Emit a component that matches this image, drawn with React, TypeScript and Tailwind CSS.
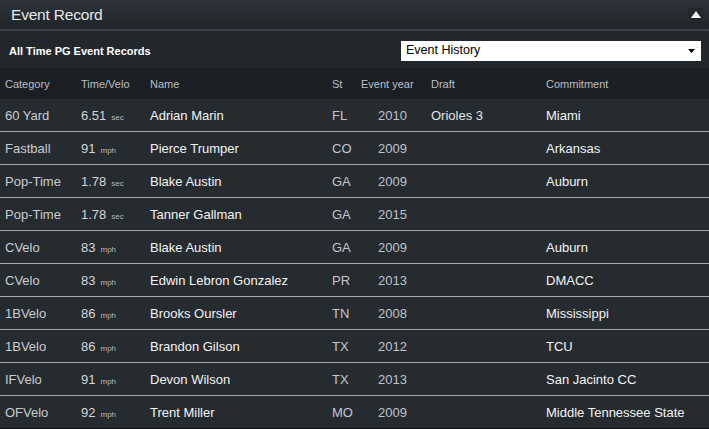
import React from 'react';

type Rec = {
  cat: string;
  val: string;
  unit: string;
  name: string;
  st: string;
  year: string;
  draft: string;
  commit: string;
};

const records: Rec[] = [
  { cat: '60 Yard', val: '6.51', unit: 'sec', name: 'Adrian Marin', st: 'FL', year: '2010', draft: 'Orioles 3', commit: 'Miami' },
  { cat: 'Fastball', val: '91', unit: 'mph', name: 'Pierce Trumper', st: 'CO', year: '2009', draft: '', commit: 'Arkansas' },
  { cat: 'Pop-Time', val: '1.78', unit: 'sec', name: 'Blake Austin', st: 'GA', year: '2009', draft: '', commit: 'Auburn' },
  { cat: 'Pop-Time', val: '1.78', unit: 'sec', name: 'Tanner Gallman', st: 'GA', year: '2015', draft: '', commit: '' },
  { cat: 'CVelo', val: '83', unit: 'mph', name: 'Blake Austin', st: 'GA', year: '2009', draft: '', commit: 'Auburn' },
  { cat: 'CVelo', val: '83', unit: 'mph', name: 'Edwin Lebron Gonzalez', st: 'PR', year: '2013', draft: '', commit: 'DMACC' },
  { cat: '1BVelo', val: '86', unit: 'mph', name: 'Brooks Oursler', st: 'TN', year: '2008', draft: '', commit: 'Mississippi' },
  { cat: '1BVelo', val: '86', unit: 'mph', name: 'Brandon Gilson', st: 'TX', year: '2012', draft: '', commit: 'TCU' },
  { cat: 'IFVelo', val: '91', unit: 'mph', name: 'Devon Wilson', st: 'TX', year: '2013', draft: '', commit: 'San Jacinto CC' },
  { cat: 'OFVelo', val: '92', unit: 'mph', name: 'Trent Miller', st: 'MO', year: '2009', draft: '', commit: 'Middle Tennessee State' },
];

export default function App() {
  return (
    <div className="w-[709px] h-[429px] overflow-hidden bg-[#262b30] font-['Liberation_Sans',Arial,sans-serif]">
      {/* Title bar */}
      <div className="h-[29px] flex items-center justify-between bg-gradient-to-b from-[#2e343a] to-[#1f2428] pl-[11px] pr-[6px]">
        <span className="text-[15.5px] text-[#e6e8ea] tracking-[-0.2px]">Event Record</span>
        <div className="w-[15px] h-[14px] flex items-center justify-center bg-[#22272b]">
          <svg width="10" height="7" viewBox="0 0 10 7">
            <path d="M5 0 L10 7 L0 7 Z" fill="#ffffff" />
          </svg>
        </div>
      </div>
      <div className="h-[2px] bg-[#3b4147]" />

      {/* Sub header */}
      <div className="h-[37px] flex items-center justify-between bg-[#22272c] pl-[9px] pr-[8px] pt-[2px]">
        <span className="text-[11px] font-bold text-white mt-[2px]">All Time PG Event Records</span>
        <div className="w-[300px] h-[20px] bg-white flex items-center justify-between pl-[5px] pr-[6px]">
          <span className="text-[12.5px] text-black">Event History</span>
          <svg width="7" height="4" viewBox="0 0 7 4">
            <path d="M0 0 L7 0 L3.5 4 Z" fill="#000000" />
          </svg>
        </div>
      </div>

      {/* Column headers */}
      <div className="h-[31px] flex items-center bg-[#1b1f23] pl-[5px] pt-[1px] text-[11px] text-[#b9bfc5]">
        <span className="w-[76px]">Category</span>
        <span className="w-[69px]">Time/Velo</span>
        <span className="w-[182px]">Name</span>
        <span className="w-[29px]">St</span>
        <span className="w-[70px]">Event year</span>
        <span className="w-[115px]">Draft</span>
        <span>Commitment</span>
      </div>

      {/* Rows */}
      {records.map((r, i) => (
        <div
          key={i}
          className={
            'h-[33px] flex items-center pl-[5px] pt-[1px] text-[13px] border-b ' +
            (i === records.length - 1 ? 'border-[#0c0e10]' : 'border-[#a3a9ae]')
          }
        >
          <span className="w-[76px] text-[#c9cdd1]">{r.cat}</span>
          <span className="w-[69px] text-[#d4d7da]">
            {r.val}
            <span className="ml-[5px] text-[8px] text-[#b5babf]">{r.unit}</span>
          </span>
          <span className="w-[182px] text-[#f2f3f4]">{r.name}</span>
          <span className="w-[29px] text-[#c3c7cb]">{r.st}</span>
          <span className="w-[70px] pl-[17px] text-[#bfc3c7]">{r.year}</span>
          <span className="w-[115px] text-[#e2e4e6]">{r.draft}</span>
          <span className="text-[#f2f3f4]">{r.commit}</span>
        </div>
      ))}
    </div>
  );
}
